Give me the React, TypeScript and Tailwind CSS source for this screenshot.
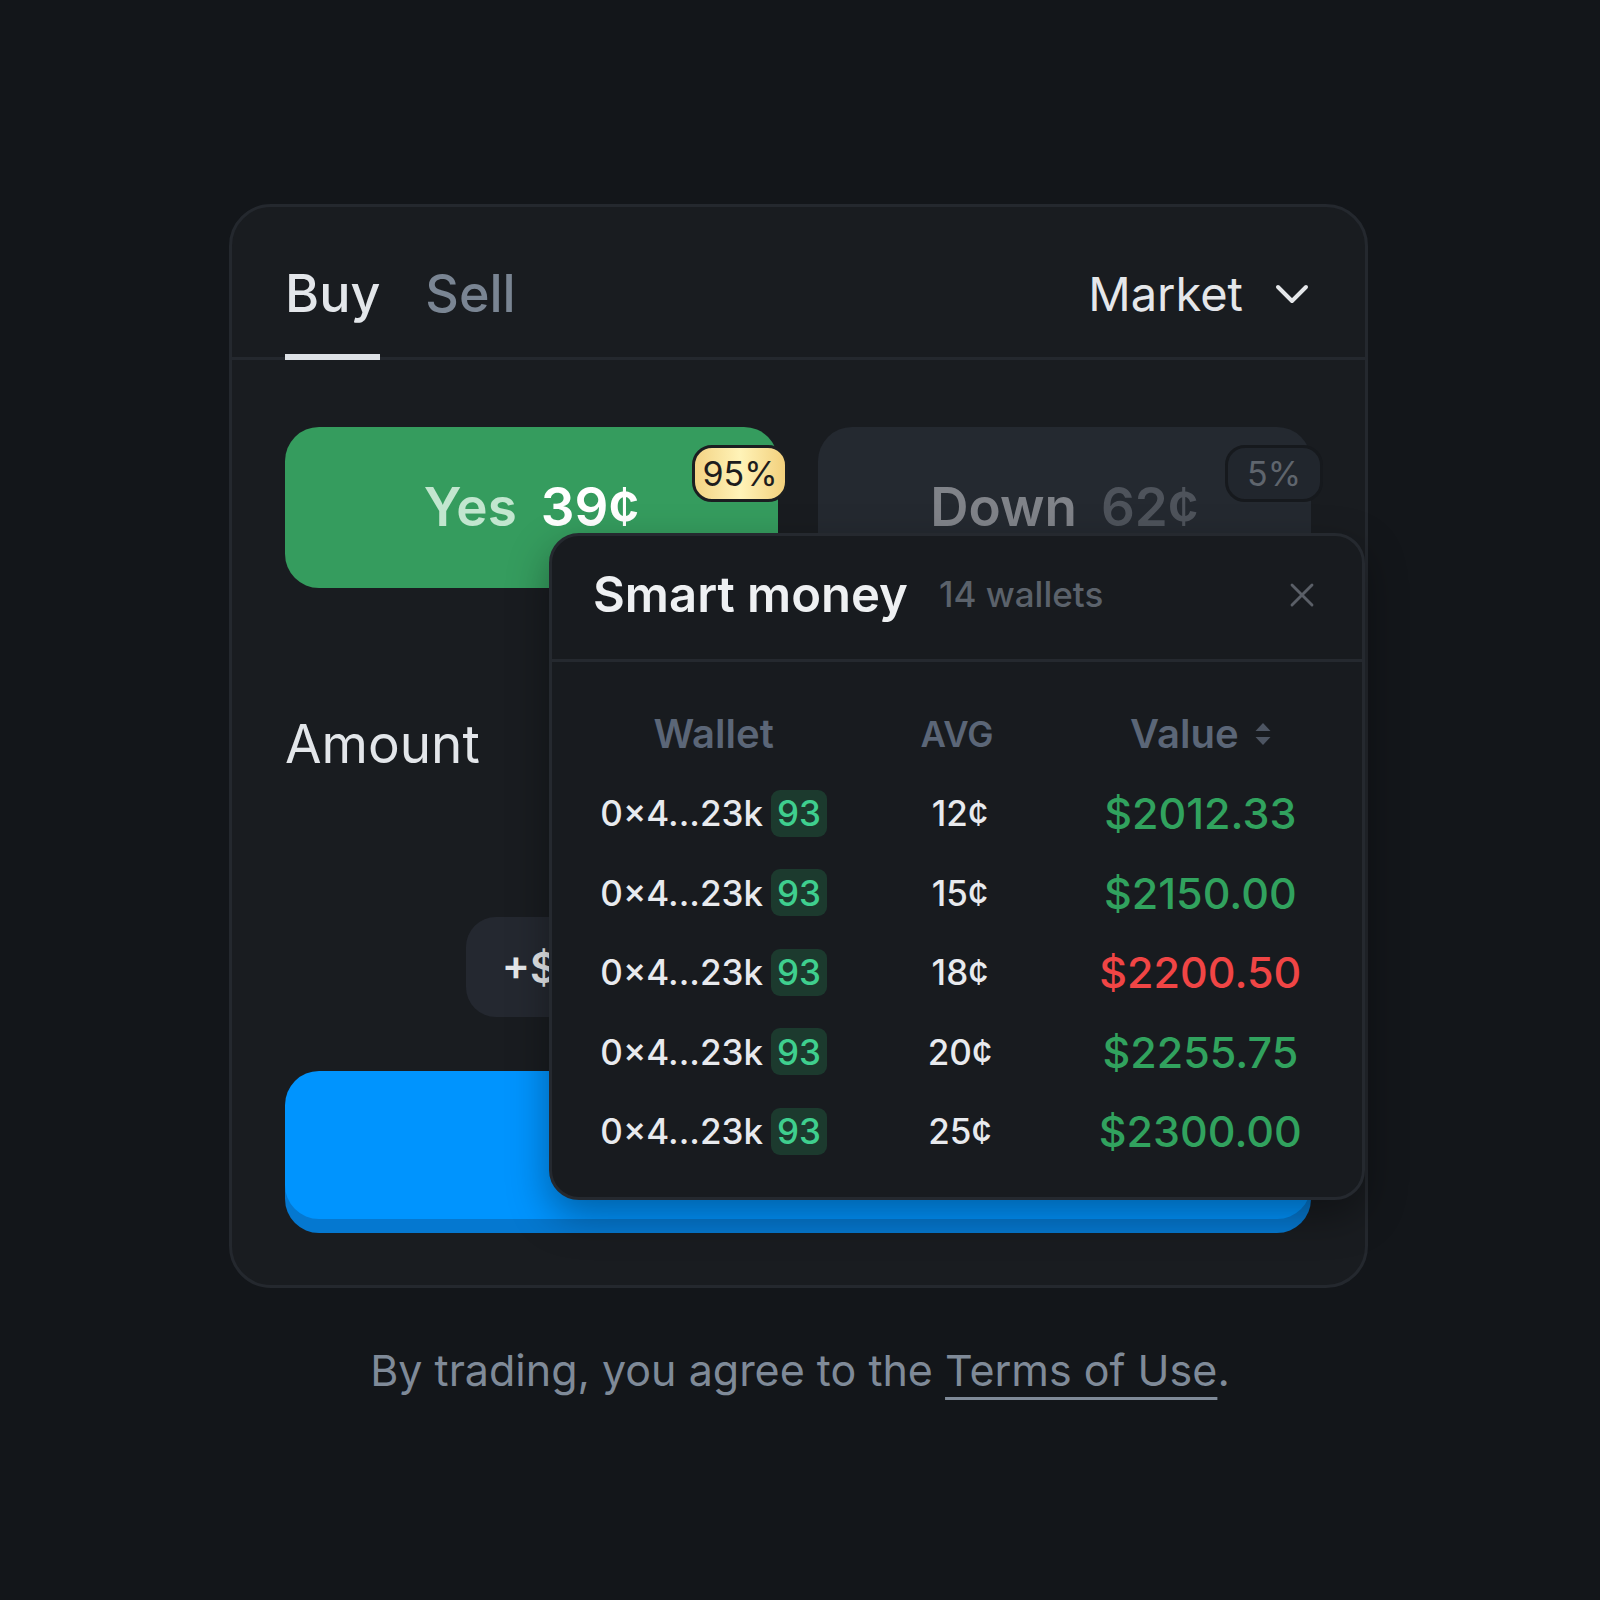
import { X } from 'lucide-react'

type Holder = { wallet: string; score: number; avg: string; value: string; loss?: boolean }

const holders: Holder[] = [
  { wallet: '0×4...23k', score: 93, avg: '12¢', value: '$2012.33' },
  { wallet: '0×4...23k', score: 93, avg: '15¢', value: '$2150.00' },
  { wallet: '0×4...23k', score: 93, avg: '18¢', value: '$2200.50', loss: true },
  { wallet: '0×4...23k', score: 93, avg: '20¢', value: '$2255.75' },
  { wallet: '0×4...23k', score: 93, avg: '25¢', value: '$2300.00' },
]

// Only the first chip peeks out from under the popup; the rest are plain shapes.
const quickAmounts = ['+$100', '', '', '']

function SortIcon() {
  return (
    <svg width="16" height="22" viewBox="0 0 16 22" className="text-[#4d5562]">
      <path d="M8 0 L15.5 8 L0.5 8 Z" fill="currentColor" />
      <path d="M0.5 14 L15.5 14 L8 22 Z" fill="currentColor" />
    </svg>
  )
}

/**
 * Who else is holding this side, shown over the order form.
 */
function SmartMoney() {
  return (
    <div className="absolute right-0 top-[326px] h-[667px] w-[816px] overflow-hidden rounded-[30px] border-[3px] border-[#25292f] bg-[#181b1f] shadow-[0_16px_40px_rgba(0,0,0,0.35)]">
      <div className="flex h-[126px] items-center justify-between border-b-[3px] border-[#25292f] pb-[6px] pl-[41px] pr-[40px]">
        <div className="flex items-center gap-[31px]">
          <h3 className="text-[49px] font-semibold leading-none text-[#eef0f2]">Smart money</h3>
          <span className="text-[35px] font-medium leading-none text-[#5b626b]">14 wallets</span>
        </div>
        <X size={40} strokeWidth={1.7} className="text-[#5a5f67]" />
      </div>

      <div className="px-[40px] pt-[32px]">
        <div className="grid h-[79.5px] grid-cols-3 items-center text-center font-semibold text-[#5b6677]">
          <span className="text-[40px]">Wallet</span>
          <span className="text-[35px]">AVG</span>
          <span className="flex items-center justify-center gap-4 text-[40px]">
            Value <SortIcon />
          </span>
        </div>

        {holders.map((h, i) => (
          <div key={i} className="grid h-[79.5px] grid-cols-3 items-center text-center">
            <div className="flex items-center justify-center gap-[8px]">
              <span className="text-[35px] font-medium text-[#e8eaee]">{h.wallet}</span>
              <span className="flex h-[47px] items-center rounded-[9px] bg-[#1c3a2e] px-[6px] text-[35px] font-medium text-[#3fcf8e]">
                {h.score}
              </span>
            </div>
            <span className="pl-[6px] text-[35px] font-medium text-[#e8eaee]">{h.avg}</span>
            <span
              className={
                h.loss
                  ? 'text-[43px] font-medium text-[#f04545]'
                  : 'text-[43px] font-medium text-[#31a25e]'
              }
            >
              {h.value}
            </span>
          </div>
        ))}
      </div>
    </div>
  )
}

export default function App() {
  return (
    <div className="flex min-h-[1600px] w-full flex-col items-center bg-[#13161a] pt-[204px] font-[Inter,sans-serif]">
      <section className="relative ml-[-3px] w-[1139px] rounded-[42px] border-[3px] border-[#24282e] bg-[#191c20]">
        <div className="flex h-[153px] items-stretch justify-between border-b-[3px] border-[#24282e] pl-[53px] pr-[56px] pt-[24px]">
          <div className="flex items-stretch gap-[45px]">
            <button className="relative flex items-center text-[52px] font-medium text-[#e3e6ea]">
              Buy
              <span className="absolute -bottom-[3px] left-0 right-0 h-[6px] bg-[#dde1e6]" />
            </button>
            <button className="flex items-center text-[52px] font-medium text-[#7a8593]">Sell</button>
          </div>
          <button className="flex items-center gap-[32px] text-[47px] text-[#e5e7ea]">
            Market
            <svg width="34" height="20" viewBox="0 0 34 20" fill="none">
              <path d="M3 3 L17 17 L31 3" stroke="#e5e7ea" strokeWidth="4" strokeLinecap="round" strokeLinejoin="round" />
            </svg>
          </button>
        </div>

        <div className="pb-[66px] pl-[53px] pr-[54px] pt-[67px]">
          <div className="flex gap-[40px]">
            <button className="relative flex h-[161px] flex-1 items-center justify-center gap-6 rounded-[34px] bg-[#359c5e] text-[53px] font-semibold">
              <span className="text-[#c2e6cf]">Yes</span>
              <span className="text-white">39¢</span>
              <span className="absolute -right-[10px] top-[18px] flex h-[57px] w-[96px] items-center justify-center rounded-[20px] border-[3px] border-[#1b1e21] bg-[linear-gradient(90deg,#f3d384,#fff3b8_50%,#f2d07c)] text-[34px] font-normal text-[#1d1d1d]">
                95%
              </span>
            </button>
            <button className="relative flex h-[161px] flex-1 items-center justify-center gap-6 rounded-[34px] bg-[#242930] text-[53px] font-semibold">
              <span className="text-[#808389]">Down</span>
              <span className="text-[#4e535b]">62¢</span>
              <span className="absolute -right-[12px] top-[18px] flex h-[57px] w-[98px] items-center justify-center rounded-[20px] border-[3px] border-[#16191d] bg-[#21262d] text-[34px] font-normal text-[#5f656d]">
                5%
              </span>
            </button>
          </div>

          <div className="mt-[124px] flex h-[64px] items-center">
            <span className="text-[53px] leading-[64px] text-[#e3e6ea]">Amount</span>
          </div>

          <div className="mt-[141px] flex justify-end gap-[15px]">
            {quickAmounts.map((q, i) => (
              <button
                key={i}
                className="flex h-[100px] w-[200px] items-center justify-center rounded-[30px] bg-[#242830] text-[42px] font-semibold text-[#e6e8eb]"
              >
                {q}
              </button>
            ))}
          </div>

          <button className="mt-[54px] flex h-[148px] w-full items-center justify-center rounded-[34px] bg-[#0094fe] shadow-[0_14px_0_#0578d0]" />
        </div>

        <SmartMoney />
      </section>

      <p className="mt-[54px] text-[43px] leading-[56px] text-[#7f8a98]">
        By trading, you agree to the{' '}
        <a className="underline decoration-[3px] underline-offset-[11px]">Terms of Use</a>.
      </p>
    </div>
  )
}
